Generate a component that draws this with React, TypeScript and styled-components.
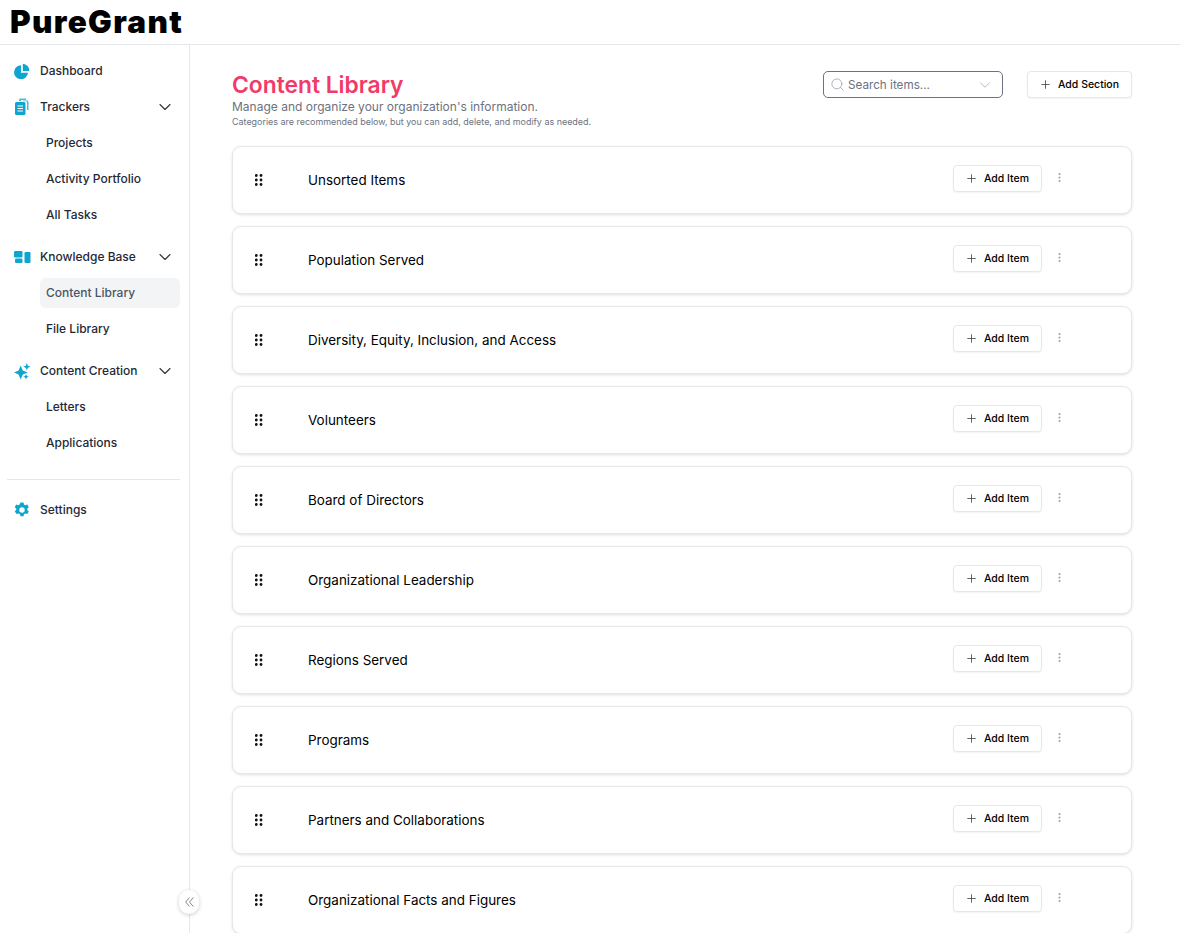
import React from "react";
import styled, { createGlobalStyle } from "styled-components";
import { ChevronDown, Plus, Search } from "lucide-react";

const GlobalStyle = createGlobalStyle`
  html, body {
    margin: 0;
    height: 100%;
    overflow: hidden;
    background: #fff;
    font-family: Inter, "Liberation Sans", sans-serif;
  }
  * { box-sizing: border-box; }
`;

const SECTIONS = [
  "Unsorted Items",
  "Population Served",
  "Diversity, Equity, Inclusion, and Access",
  "Volunteers",
  "Board of Directors",
  "Organizational Leadership",
  "Regions Served",
  "Programs",
  "Partners and Collaborations",
  "Organizational Facts and Figures",
];

const BLUE = "#0ea5cf";

const PieIcon = () => (
  <svg width="16" height="16" viewBox="0 0 16 16" fill={BLUE}>
    <path d="M7 2.2a7 7 0 1 0 7 7.6H7z" />
    <path d="M8.8 0.8a7 7 0 0 1 6.6 7.2H8.8z" />
  </svg>
);

const FilesIcon = () => (
  <svg width="16" height="18" viewBox="0 0 16 18" fill={BLUE}>
    <path d="M5 3V2a1.5 1.5 0 0 1 1.5-1.5H12V2H7v1z" opacity=".75" />
    <path d="M9 3.2V2.6h4A1.5 1.5 0 0 1 14.5 4v8H13V4.5A1.3 1.3 0 0 0 11.7 3.2z" opacity=".75" />
    <path
      fillRule="evenodd"
      d="M2.5 4H10a1.5 1.5 0 0 1 1.5 1.5v10A1.5 1.5 0 0 1 10 17H2.5A1.5 1.5 0 0 1 1 15.5v-10A1.5 1.5 0 0 1 2.5 4zM3.5 7.5v1H9v-1zM3.5 10v1H9v-1zM3.5 12.5v1H9v-1z"
    />
  </svg>
);

const BlocksIcon = () => (
  <svg width="17" height="12" viewBox="0 0 17 12" fill={BLUE}>
    <rect x="0" y="0" width="8.5" height="6.5" rx="1.2" />
    <rect x="1" y="7.5" width="7.5" height="4.5" rx="1.2" />
    <rect x="10.5" y="1" width="6" height="11" rx="1.2" />
  </svg>
);

const SparkIcon = () => (
  <svg width="17" height="17" viewBox="0 0 17 17" fill={BLUE}>
    <path d="M6.7 2.5 8.8 7.400 13.700 9.500 8.800 11.600 6.700 16.500 4.600 11.600 0 9.500 4.600 7.400z" />
    <path d="M12.8 0l1 2.700 2.700 1-2.700 1-1 2.700-1-2.700-2.700-1 2.700-1z" />
    <path d="M12 11l.8 2 2 .8-2 .8-.8 2-.8-2-2-.8 2-.8z" />
  </svg>
);

const GearIcon = () => (
  <svg width="16" height="16" viewBox="0 0 16 16" fill={BLUE}>
    <path
      fillRule="evenodd"
      d="M6.5.5h3l.5 2 1.3.7 2-.6 1.5 2.6-1.5 1.4v1.5l1.5 1.4-1.5 2.6-2-.6-1.3.8-.5 1.900h-3l-.5-1.900-1.300-.8-2 .6L.7 9.500l1.500-1.400V6.600L.7 5.200l1.500-2.600 2 .6L5.500 2.500zM8 5.300a2.700 2.700 0 1 0 0 5.400 2.700 2.700 0 0 0 0-5.400z"
    />
  </svg>
);

const GripIcon = () => (
  <svg width="8" height="12" viewBox="0 0 8 12" fill="#111">
    {[1.3, 6].map((cx) =>
      [1.5, 6, 10.5].map((cy) => <circle key={`${cx}-${cy}`} cx={cx} cy={cy} r="1.4" />)
    )}
  </svg>
);

const KebabIcon = () => (
  <svg width="3" height="9" viewBox="0 0 3 9" fill="#9a9ea5">
    <circle cx="1.5" cy="1" r="1" />
    <circle cx="1.5" cy="4.5" r="1" />
    <circle cx="1.5" cy="8" r="1" />
  </svg>
);

const CollapseIcon = () => (
  <svg width="9" height="10" viewBox="0 0 9 10" fill="none" stroke="#80848b" strokeWidth="1">
    <path d="M4.5.5.7 5l3.800 4.500M8.300.5 4.500 5l3.800 4.500" />
  </svg>
);

const Chevron = () => <ChevronDown size={20} strokeWidth={1.3} color="#333" />;

export default function App() {
  return (
    <Page>
      <GlobalStyle />
      <Header>
        <Logo>PureGrant</Logo>
      </Header>
      <Body>
        <Sidebar>
          <NavRow>
            <NavIcon><PieIcon /></NavIcon>
            <NavLabel>Dashboard</NavLabel>
          </NavRow>

          <NavGroup>
            <NavRow>
              <NavIcon><FilesIcon /></NavIcon>
              <NavLabel>Trackers</NavLabel>
              <Chevron />
            </NavRow>
            <SubItem>Projects</SubItem>
            <SubItem>Activity Portfolio</SubItem>
            <SubItem>All Tasks</SubItem>
          </NavGroup>

          <NavGroup>
            <NavRow>
              <NavIcon><BlocksIcon /></NavIcon>
              <NavLabel>Knowledge Base</NavLabel>
              <Chevron />
            </NavRow>
            <SubItem $active>Content Library</SubItem>
            <SubItem>File Library</SubItem>
          </NavGroup>

          <NavGroup>
            <NavRow>
              <NavIcon><SparkIcon /></NavIcon>
              <NavLabel>Content Creation</NavLabel>
              <Chevron />
            </NavRow>
            <SubItem>Letters</SubItem>
            <SubItem>Applications</SubItem>
          </NavGroup>

          <Divider />

          <NavRow>
            <NavIcon><GearIcon /></NavIcon>
            <NavLabel>Settings</NavLabel>
          </NavRow>

          <CollapseButton>
            <CollapseIcon />
          </CollapseButton>
        </Sidebar>

        <Main>
          <TopRow>
            <div>
              <Title>Content Library</Title>
              <Subtitle>Manage and organize your organization's information.</Subtitle>
              <Hint>Categories are recommended below, but you can add, delete, and modify as needed.</Hint>
            </div>
            <TopActions>
              <SearchBox>
                <Search size={15} strokeWidth={1.3} color="#9ca3af" />
                <SearchText>Search items...</SearchText>
                <ChevronDown size={18} strokeWidth={1.1} color="#a8adb5" />
              </SearchBox>
              <AddButton $wide>
                <Plus size={13} strokeWidth={1.5} color="#444" />
                Add Section
              </AddButton>
            </TopActions>
          </TopRow>

          <CardList>
            {SECTIONS.map((name) => (
              <Card key={name}>
                <Grip><GripIcon /></Grip>
                <CardTitle>{name}</CardTitle>
                <AddButton>
                  <Plus size={13} strokeWidth={1.5} color="#444" />
                  Add Item
                </AddButton>
                <Kebab><KebabIcon /></Kebab>
              </Card>
            ))}
          </CardList>
        </Main>
      </Body>
    </Page>
  );
}

const Page = styled.div`
  width: 1180px;
  height: 933px;
  display: flex;
  flex-direction: column;
  overflow: hidden;
`;

const Header = styled.header`
  height: 45px;
  flex: none;
  border-bottom: 1px solid #e5e7eb;
  padding-left: 10px;
  display: flex;
  align-items: center;
`;

const Logo = styled.div`
  font-size: 31.5px;
  font-weight: 900;
  line-height: 44px;
  color: #000;
  letter-spacing: 1.3px;
`;

const Body = styled.div`
  flex: 1;
  display: flex;
  min-height: 0;
`;

const Sidebar = styled.aside`
  position: relative;
  width: 190px;
  flex: none;
  border-right: 1px solid #e5e7eb;
  padding: 8px 9px 0 7px;
`;

const NavGroup = styled.div`
  display: flex;
  flex-direction: column;
  margin-bottom: 6px;
`;

const NavRow = styled.div`
  height: 36px;
  display: flex;
  align-items: center;
  padding: 0 5px 0 7px;
`;

const NavIcon = styled.span`
  width: 26px;
  flex: none;
  display: flex;
  align-items: center;
`;

const NavLabel = styled.span`
  flex: 1;
  padding-bottom: 1px;
  font-size: 12px;
  font-weight: 500;
  color: #1f2937;
`;

const SubItem = styled.div<{ $active?: boolean }>`
  height: 30px;
  margin: 3px 0 3px 33px;
  padding: 0 0 1px 6px;
  display: flex;
  align-items: center;
  border-radius: 6px;
  font-size: 12px;
  font-weight: 500;
  color: ${(props) => (props.$active ? "#4b5563" : "#1f2937")};
  background: ${(props) => (props.$active ? "#f3f4f6" : "transparent")};
`;

const Divider = styled.div`
  height: 1px;
  background: #e5e7eb;
  margin: 18px 0 12px;
`;

const CollapseButton = styled.button`
  position: absolute;
  right: -10px;
  bottom: 19px;
  width: 20px;
  height: 24px;
  padding: 0;
  border: none;
  border-radius: 10px;
  background: #fff;
  box-shadow: 0 1px 4px rgba(0, 0, 0, 0.2);
  display: flex;
  align-items: center;
  justify-content: center;
`;

const Main = styled.main`
  flex: 1;
  min-width: 0;
  padding: 26px 48px 0 42px;
`;

const TopRow = styled.div`
  display: flex;
  justify-content: space-between;
  align-items: flex-start;
  margin-bottom: 18px;
`;

const Title = styled.h1`
  margin: 0 0 1px;
  font-size: 22.8px;
  font-weight: 600;
  line-height: 28px;
  color: #f23a68;
`;

const Subtitle = styled.p`
  margin: 0;
  font-size: 12px;
  line-height: 13px;
  color: #6b7280;
`;

const Hint = styled.p`
  margin: 3px 0 0;
  font-size: 8.95px;
  line-height: 12px;
  color: #6b7280;
`;

const TopActions = styled.div`
  display: flex;
  gap: 24px;
`;

const SearchBox = styled.div`
  width: 180px;
  height: 27px;
  display: flex;
  align-items: center;
  gap: 3px;
  padding: 0 8px 0 6px;
  border: 1px solid #6b7280;
  border-radius: 5px;
`;

const SearchText = styled.span`
  flex: 1;
  font-size: 11.7px;
  color: #6b7280;
`;

const AddButton = styled.button<{ $wide?: boolean }>`
  width: ${(props) => (props.$wide ? "105px" : "89px")};
  height: 27px;
  flex: none;
  padding: 0 1px 0 0;
  display: flex;
  align-items: center;
  justify-content: center;
  gap: 6px;
  background: #fff;
  border: 1px solid #e5e7eb;
  border-radius: 4px;
  box-shadow: 0 1px 2px rgba(0, 0, 0, 0.05);
  font-family: inherit;
  font-size: 10.5px;
  font-weight: 500;
  color: #000;
`;

const CardList = styled.div`
  display: flex;
  flex-direction: column;
  gap: 12px;
`;

const Card = styled.div`
  height: 68px;
  flex: none;
  display: flex;
  align-items: flex-start;
  padding-top: 18px;
  background: #fff;
  border: 1px solid #e5e7eb;
  border-radius: 9px;
  box-shadow: 0 1px 3px rgba(0, 0, 0, 0.12);
`;

const Grip = styled.span`
  width: 75px;
  padding: 9px 0 0 22px;
  flex: none;
  display: flex;
`;

const CardTitle = styled.span`
  flex: 1;
  font-size: 13.45px;
  line-height: 30px;
  color: #000;
`;

const Kebab = styled.span`
  width: 89px;
  flex: none;
  padding: 8px 0 0 16px;
  display: flex;
`;
